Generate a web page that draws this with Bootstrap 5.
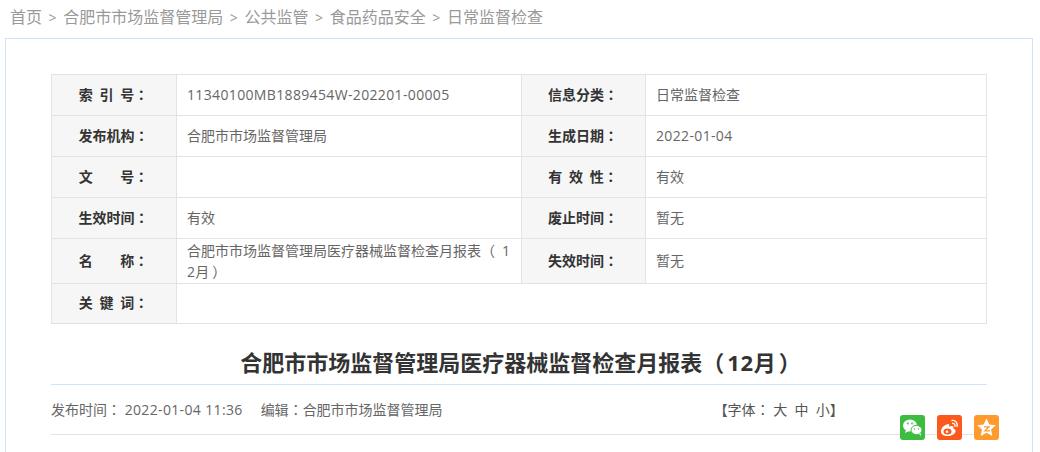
<!DOCTYPE html>
<html lang="zh-CN">
<head>
<meta charset="utf-8">
<title>日常监督检查</title>
<link href="https://cdn.jsdelivr.net/npm/bootstrap@5.3.0/dist/css/bootstrap.min.css" rel="stylesheet">
<style>
html,body{height:452px;overflow:hidden;background:#fff}
body{font-family:"Open Sans","Noto Sans CJK SC",sans-serif;font-size:14px;color:#666}
.crumbs{height:38px;padding:5px 0 0 10px;font-size:16px;line-height:24px;color:#999}
.crumbs i{font-style:normal;margin:0 6.6px;font-size:14px}
.sheet{margin:0 7px 0 5px;border:1px solid #cfe4fa;border-bottom:0;padding:35px 45px 0;height:414px;position:relative}
.meta-table{width:935px;table-layout:fixed;border-collapse:collapse;margin:0}
.meta-table td,.meta-table th{border:1px solid #e3e3e3;padding:0 10px;line-height:20px;font-size:14px;vertical-align:middle;font-weight:400;color:#666}
.meta-table th{background:#f6f6f6;color:#333;text-align:center;font-weight:700;padding:0 1px 1px 0;word-spacing:3px}
.r41{height:41px}.r45{height:45px}.r40{height:40px}
.r40 th{padding-bottom:3px}
.num{letter-spacing:.35px}
.pn{font-family:"Noto Sans CJK TC",sans-serif}
.gap-l{margin-left:3px}
.gap-open{margin-left:7px}
.doc-title{font-size:22px;font-weight:700;color:#333;text-align:center;margin:0;height:61px;line-height:74px;border-bottom:1px solid #cfe4fa;padding-left:3px}
.doc-title .num{letter-spacing:.6px;margin-left:3px}
.doc-title .gap-l{margin-left:3px}
.doc-meta{height:50px;border-bottom:1px solid #e3e3e3;font-size:14px;color:#666;line-height:48px}
.doc-meta .fs{margin-left:271px;color:#555}
.editor{margin-left:18px}
.share{position:absolute;left:894px;top:376px}
.share a{display:block;width:25px;height:25px;border-radius:3px}
.wx{background:#3cbd40}.wb{background:#fb5a1c}.qz{background:#ff9a2e}
.share svg{display:block;width:25px;height:25px}
</style>
</head>
<body>
<nav class="crumbs">首页<i>&gt;</i>合肥市市场监督管理局<i>&gt;</i>公共监管<i>&gt;</i>食品药品安全<i>&gt;</i>日常监督检查</nav>
<div class="sheet">
<table class="meta-table">
<colgroup><col style="width:125px"><col style="width:345px"><col style="width:124px"><col style="width:341px"></colgroup>
<tr class="r41"><th>索 引 号<span class="pn" lang="zh-TW">：</span></th><td class="num">11340100MB1889454W-202201-00005</td><th>信息分类<span class="pn" lang="zh-TW">：</span></th><td>日常监督检查</td></tr>
<tr class="r41"><th>发布机构<span class="pn" lang="zh-TW">：</span></th><td>合肥市市场监督管理局</td><th>生成日期<span class="pn" lang="zh-TW">：</span></th><td class="num">2022-01-04</td></tr>
<tr class="r41"><th>文&emsp;&nbsp;&nbsp;号<span class="pn" lang="zh-TW">：</span></th><td></td><th>有 效 性<span class="pn" lang="zh-TW">：</span></th><td>有效</td></tr>
<tr class="r41"><th>生效时间<span class="pn" lang="zh-TW">：</span></th><td>有效</td><th>废止时间<span class="pn" lang="zh-TW">：</span></th><td>暂无</td></tr>
<tr class="r45"><th>名&emsp;&nbsp;&nbsp;称<span class="pn" lang="zh-TW">：</span></th><td>合肥市市场监督管理局医疗器械监督检查月报表<span class="pn" lang="zh-TW">（</span><span class="num gap-open">1</span><br><span class="num">2</span>月<span class="pn gap-l" lang="zh-TW">）</span></td><th>失效时间<span class="pn" lang="zh-TW">：</span></th><td>暂无</td></tr>
<tr class="r40"><th>关 键 词<span class="pn" lang="zh-TW">：</span></th><td colspan="3"></td></tr>
</table>
<h1 class="doc-title">合肥市市场监督管理局医疗器械监督检查月报表<span class="pn" lang="zh-TW">（</span><span class="num">12</span>月<span class="pn gap-l" lang="zh-TW">）</span></h1>
<div class="doc-meta d-flex"><span>发布时间<span class="pn" lang="zh-TW">：</span> <span class="num">2022-01-04 11:36</span></span><span class="editor">编辑<span class="pn" lang="zh-TW">：</span>合肥市市场监督管理局</span><span class="fs">【字体<span class="pn" lang="zh-TW">：</span> 大&nbsp; 中&nbsp; 小】</span></div>
<div class="share d-flex gap-2">
<a class="wx me-1" href="#" aria-label="微信"><svg viewBox="0 0 25 25"><ellipse cx="10" cy="10.5" rx="7" ry="6" fill="#fff"/><path d="M6 15l-1 3 4-2z" fill="#fff"/><ellipse cx="16.5" cy="15" rx="5.5" ry="4.6" fill="#fff" stroke="#3cbd40"/><path d="M19 19l2 2-.5-3z" fill="#fff"/><circle cx="8" cy="8.5" r=".9" fill="#3cbd40"/><circle cx="12" cy="8.5" r=".9" fill="#3cbd40"/><circle cx="14.5" cy="14" r=".7" fill="#3cbd40"/><circle cx="18.5" cy="14" r=".7" fill="#3cbd40"/></svg></a>
<a class="wb me-1" href="#" aria-label="微博"><svg viewBox="0 0 25 25"><path d="M11 9c-4 1-7.500 4.500-7 8 .5 3 4 4.500 8 4 4-.5 7-3 6.500-5.500-.3-1.300-1.500-1.800-2.300-2 .8-1.800-.2-3-2-2.500l-2 .7c.3-1.500-.2-3-1.200-2.700z" fill="#fff"/><ellipse cx="10.500" cy="16.500" rx="4" ry="3" fill="#fb5a1c"/><circle cx="10" cy="16.800" r="1.300" fill="#fff"/><path d="M15 5.500c3.500-.5 6 2.500 5 6M15.500 8.300c1.800-.2 2.900 1.200 2.400 3" fill="none" stroke="#fff" stroke-width="1.300" stroke-linecap="round"/></svg></a>
<a class="qz" href="#" aria-label="QQ空间"><svg viewBox="0 0 25 25"><path d="M12.500 3.500l2.800 5.900 6.500.8-4.800 4.400 1.300 6.400-5.800-3.200-5.800 3.200 1.300-6.400-4.800-4.400 6.500-.8z" fill="#fff"/><path d="M10 11.800h5l-4 4h5" fill="none" stroke="#ff9a2e" stroke-width="1.300"/></svg></a>
</div>
</div>
<script src="https://cdn.jsdelivr.net/npm/bootstrap@5.3.0/dist/js/bootstrap.bundle.min.js"></script>
</body>
</html>
